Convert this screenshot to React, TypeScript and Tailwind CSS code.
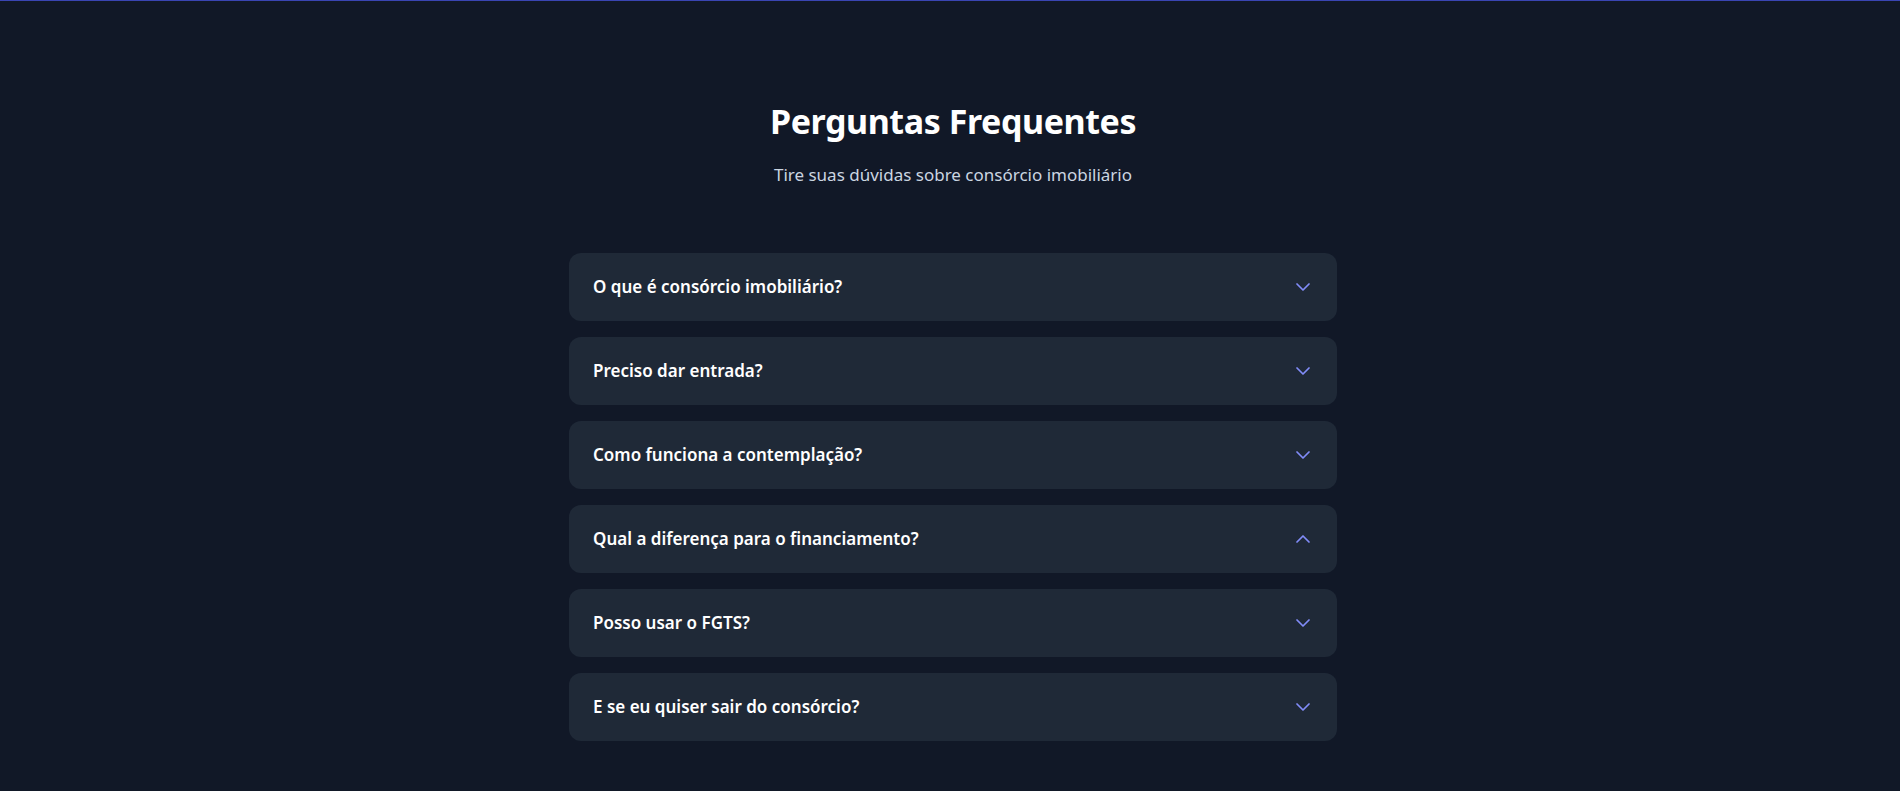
import { useState } from "react";
import { ChevronDown, ChevronUp } from "lucide-react";

const faqs = [
  {
    question: "O que é consórcio imobiliário?",
    answer:
      "É uma modalidade de compra planejada em que um grupo de pessoas se une para formar uma poupança coletiva.",
  },
  {
    question: "Preciso dar entrada?",
    answer: "Não. No consórcio você não precisa pagar entrada.",
  },
  {
    question: "Como funciona a contemplação?",
    answer: "A contemplação acontece por sorteio ou por lance nas assembleias mensais.",
  },
  {
    question: "Qual a diferença para o financiamento?",
    answer: "",
  },
  {
    question: "Posso usar o FGTS?",
    answer: "Sim, o FGTS pode ser usado para lance ou para complementar a carta de crédito.",
  },
  {
    question: "E se eu quiser sair do consórcio?",
    answer: "Você pode solicitar a desistência e receber os valores conforme as regras do contrato.",
  },
];

const App = () => {
  // the 4th item shows as open (chevron up) but its answer is empty
  const [openIdx, setOpenIdx] = useState<number | null>(3);

  return (
    <section
      className="min-h-[791px] w-full bg-[#111827] border-t border-[#3a45b3] pt-[100px] pb-[50px] pl-[22px] pr-4"
      style={{ fontFamily: '"Noto Sans", "Open Sans", sans-serif' }}
    >
      <div className="max-w-3xl mx-auto">
        {/* Header */}
        <div className="text-center mb-16">
          <h2 className="text-[34px] leading-10 tracking-[-0.0125em] font-bold text-white mb-5">
            Perguntas Frequentes
          </h2>
          <p className="text-[17px] leading-7 text-[#cbd5e1]">Tire suas dúvidas sobre consórcio imobiliário</p>
        </div>

        {/* Items */}
        <div className="flex flex-col gap-4">
          {faqs.map((faq, idx) => {
            const isOpen = openIdx === idx;
            return (
              <div key={idx} className="bg-[#1f2937] rounded-xl">
                <button
                  className="w-full flex items-center justify-between pl-6 pr-[22px] py-5 text-left cursor-pointer"
                  onClick={() => setOpenIdx(isOpen ? null : idx)}
                >
                  <span className="text-[17px] leading-7 font-semibold text-white">{faq.question}</span>
                  {isOpen ? (
                    <ChevronUp size={24} strokeWidth={1.75} className="text-[#818cf8]" />
                  ) : (
                    <ChevronDown size={24} strokeWidth={1.75} className="text-[#818cf8]" />
                  )}
                </button>
                {isOpen && faq.answer && (
                  <div className="px-6 pb-5 text-[#cbd5e1]">{faq.answer}</div>
                )}
              </div>
            );
          })}
        </div>
      </div>
    </section>
  );
};

export default App;
